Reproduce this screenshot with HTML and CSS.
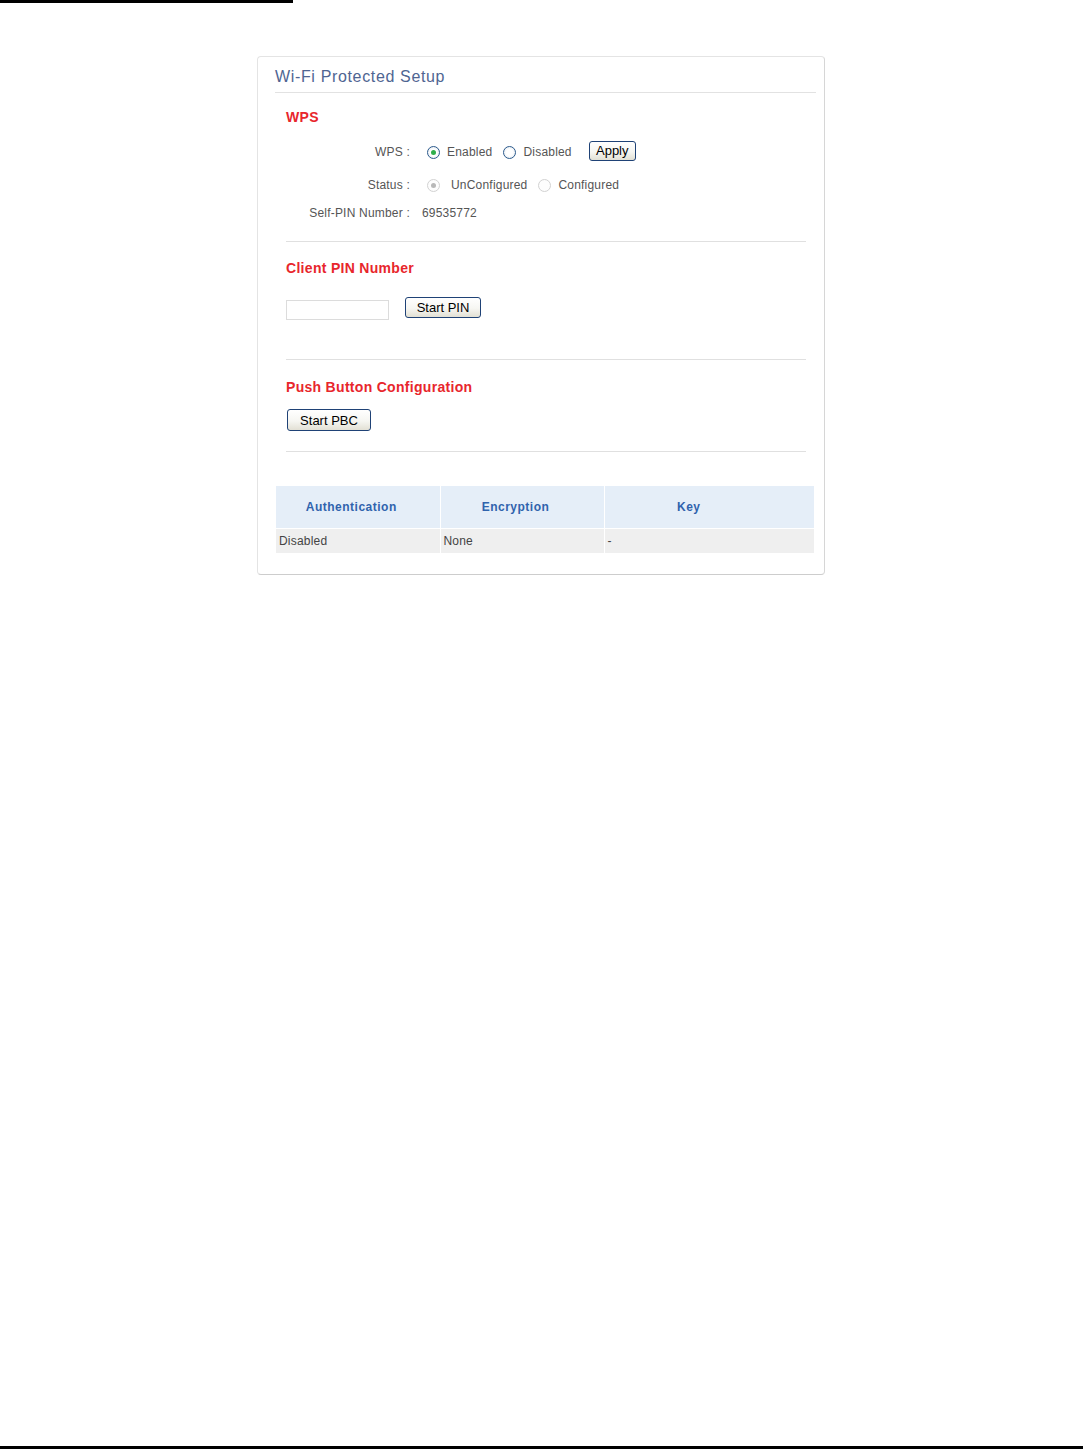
FILE: index.html
```html
<!DOCTYPE html>
<html lang="en">
<head>
    <meta charset="UTF-8">
    <title>Wi-Fi Protected Setup</title>
    <link rel="stylesheet" href="styles.css">
</head>
<body>
    <div class="top-rule"></div>

    <div class="panel">
        <div class="panel-title">Wi-Fi Protected Setup</div>

        <div class="section">
            <h2 class="section-title">WPS</h2>
            <div class="form-row row-wps">
                <span class="label">WPS :</span>
                <label class="opt"><input type="radio" name="wps" checked> Enabled</label>
                <label class="opt"><input type="radio" name="wps"> Disabled</label>
                <button class="btn btn-apply">Apply</button>
            </div>
            <div class="form-row row-status">
                <span class="label">Status :</span>
                <label class="opt opt-wide"><input type="radio" name="status" checked disabled> UnConfigured</label>
                <label class="opt opt-wide"><input type="radio" name="status" disabled> Configured</label>
            </div>
            <div class="form-row row-pin">
                <span class="label">Self-PIN Number :</span>
                <span class="value">69535772</span>
            </div>
        </div>

        <div class="section section-client">
            <h2 class="section-title">Client PIN Number</h2>
            <div class="pin-row">
                <input type="text" class="pin-input">
                <button class="btn btn-pin">Start PIN</button>
            </div>
        </div>

        <div class="section section-pbc">
            <h2 class="section-title">Push Button Configuration</h2>
            <button class="btn btn-pbc">Start PBC</button>
        </div>

        <table class="sec-table">
            <tr>
                <th class="col-auth">Authentication</th>
                <th class="col-enc">Encryption</th>
                <th class="col-key">Key</th>
            </tr>
            <tr>
                <td>Disabled</td>
                <td>None</td>
                <td>-</td>
            </tr>
        </table>
    </div>

    <div class="bottom-rule"></div>
</body>
</html>
```

FILE: styles.css
```css
* {
    box-sizing: border-box;
}

body {
    margin: 0;
    height: 100vh;
    display: flex;
    flex-direction: column;
    background: #fff;
    font-family: "Liberation Sans", Arial, sans-serif;
    font-size: 12px;
    letter-spacing: 0.2px;
    color: #444;
}

.top-rule {
    width: 293px;
    height: 3px;
    background: #000;
}

.bottom-rule {
    margin-top: auto;
    height: 3px;
    background: #000;
}

.panel {
    margin: 53px 0 0 257px;
    width: 568px;
    border: 1px solid #e4e4e4;
    border-right-color: #d6d6d6;
    border-bottom-color: #cdcdcd;
    border-radius: 4px;
    padding-bottom: 21px;
}

.panel-title {
    margin: 0 8px 0 17px;
    padding-top: 10px;
    height: 36px;
    line-height: 20px;
    font-size: 16px;
    letter-spacing: 0.65px;
    color: #4f6592;
    border-bottom: 1px solid #e2e2e2;
}

.section {
    margin: 0 18px 0 28px;
    border-bottom: 1px solid #e0e0e0;
}

.section-title {
    margin: 14px 0 0;
    line-height: 20px;
    font-size: 14px;
    font-weight: bold;
    color: #e8262c;
    letter-spacing: 0.3px;
}

.form-row {
    display: flex;
    align-items: center;
    height: 20px;
}

.row-wps {
    margin-top: 15px;
}

.row-status {
    margin-top: 13px;
}

.row-pin {
    margin-top: 8px;
    margin-bottom: 18px;
}

.label {
    width: 124px;
    text-align: right;
    color: #555;
}

.value {
    margin-left: 12px;
    color: #555;
}

.opt {
    display: flex;
    align-items: center;
    gap: 7px;
    margin-left: 17px;
    color: #555;
}

.row-wps .opt + .opt {
    margin-left: 11px;
}

.opt-wide {
    gap: 11px;
}

.row-status .opt + .opt {
    margin-left: 11px;
    gap: 7px;
}

.opt input {
    appearance: none;
    margin: 0;
    width: 13px;
    height: 13px;
    border: 1px solid #2c5a8c;
    border-radius: 50%;
    background: radial-gradient(circle, #fff 40%, #dde6ef 100%);
    position: relative;
}

.opt input:checked::after {
    content: "";
    position: absolute;
    left: 3px;
    top: 3px;
    width: 5px;
    height: 5px;
    border-radius: 50%;
    background: #2fae4b;
}

.opt input:disabled {
    border-color: #d2d2d2;
    background: #fdfdfd;
}

.opt input:disabled:checked::after {
    background: #b8b8b8;
}

.btn {
    font-family: "Liberation Sans", Arial, sans-serif;
    font-size: 13px;
    color: #000;
    padding: 0;
    border: 1px solid #1f4276;
    border-radius: 3px;
    background: linear-gradient(#ffffff, #f6f6f2 55%, #e2e0d4);
    cursor: pointer;
}

.btn-apply {
    margin-left: 17px;
    width: 47px;
    height: 20px;
    margin-top: -3px;
}

.section-client .section-title {
    margin-top: 16px;
}

.pin-row {
    display: flex;
    align-items: flex-start;
    margin-top: 19px;
    margin-bottom: 39px;
}

.pin-input {
    margin: 3px 0 0;
    width: 103px;
    height: 20px;
    border: 1px solid #dcdcdc;
}

.btn-pin {
    margin-left: 16px;
    width: 76px;
    height: 21px;
}

.section-pbc .section-title {
    margin-top: 17px;
}

.btn-pbc {
    display: block;
    margin: 12px 0 20px 1px;
    width: 84px;
    height: 22px;
}

.sec-table {
    margin: 34px 0 0 18px;
    width: 538px;
    border-collapse: collapse;
}

.sec-table th,
.sec-table td {
    border: 1px solid #fff;
}

.sec-table tr > :first-child {
    border-left: none;
}

.sec-table tr > :last-child {
    border-right: none;
}

.sec-table th {
    height: 42px;
    background: #e5eef8;
    color: #3063ad;
    font-size: 12px;
    font-weight: bold;
    letter-spacing: 0.5px;
    border-top: none;
}

.col-auth,
.col-enc {
    width: 164px;
    padding-right: 14px;
}

.col-key {
    padding-right: 42px;
}

.sec-table td {
    height: 25px;
    padding: 0 3px;
    background: #efefef;
    color: #444;
    border-bottom: none;
}
```
